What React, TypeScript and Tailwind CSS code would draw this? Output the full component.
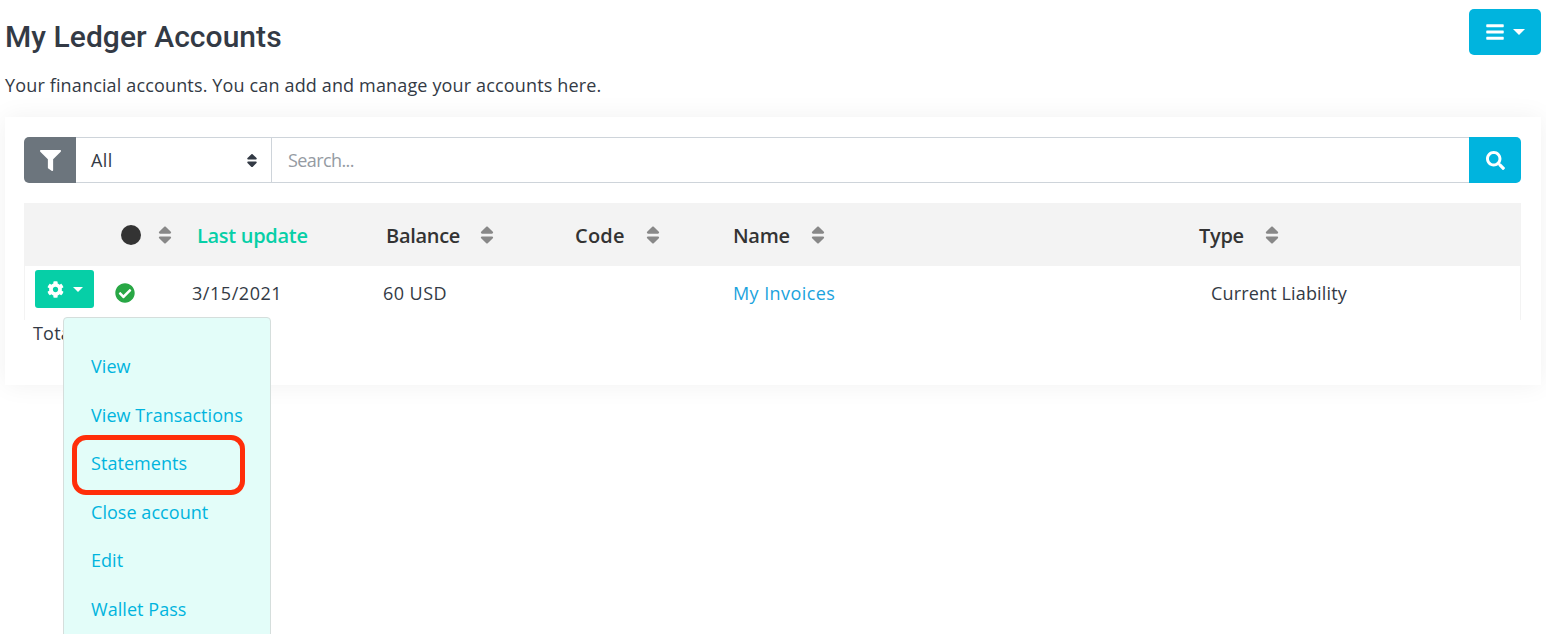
import { FaBars, FaCheckCircle, FaCog, FaFilter, FaSearch, FaSort } from "react-icons/fa";

const Caret = ({ cls }: { cls: string }) => (
  <span className={`inline-block w-0 h-0 border-x-[5px] border-x-transparent border-t-[5px] border-t-white ${cls}`} />
);

const Sort = () => <FaSort className="text-[#888888] w-[14px] h-[22px] shrink-0" />;

const Head = ({ label, pl, gap, green, cls }: { label: string; pl: string; gap: string; green?: boolean; cls?: string }) => (
  <div className={`flex items-center ${pl} ${gap}`}>
    <span className={`text-[20px] font-semibold leading-none relative top-[1px] ${green ? "text-[#06cfa7]" : "text-[#333333]"} ${cls ?? "tracking-[-0.3px]"}`}>{label}</span>
    {!green && <Sort />}
  </div>
);

const items = ["View", "View Transactions", "Statements", "Close account", "Edit", "Wallet Pass"];

export default function App() {
  return (
    <div className="relative h-[634px] w-[1546px] overflow-hidden bg-white text-[#333a45] font-['Open_Sans','Noto_Sans',sans-serif]">
      <div className="flex justify-between pl-[5px] pr-[5px] pt-[9px]">
        <h1 className="font-['Roboto',sans-serif] text-[30px] font-medium leading-[55px] tracking-[0.05px]">My Ledger Accounts</h1>
        <button className="flex h-[46px] w-[72px] items-center justify-center gap-[9px] rounded-[5px] bg-[#00b4de]">
          <FaBars className="h-[20px] w-[18px] text-white" />
          <Caret cls="border-x-[6px] border-t-[6px]" />
        </button>
      </div>
      <p className="ml-[5px] mt-[7px] text-[18px] leading-[28px] tracking-[0.15px]">Your financial accounts. You can add and manage your accounts here.</p>

      <div className="mx-[5px] mt-[18px] h-[268px] bg-white pl-[19px] pr-[20px] pt-[20px] shadow-[0_0_24px_rgba(0,0,0,0.06)]">
        <div className="flex h-[46px]">
          <div className="flex w-[52px] items-center justify-center rounded-l-[5px] bg-[#6c757d]">
            <FaFilter className="h-[21px] w-[21px] text-white" />
          </div>
          <div className="flex w-[196px] items-center justify-between border-y border-r border-[#ced4da] pl-[15px] pr-[13px] text-[18px]">
            <span className="tracking-[0.4px]">All</span>
            <FaSort className="h-[17px] w-[12px] text-[#333a45]" />
          </div>
          <div className="flex flex-1 items-center border-y border-[#ced4da] pl-[16px] text-[18px] tracking-[-0.6px] text-[#959ba3]">Search...</div>
          <div className="flex w-[52px] items-center justify-center rounded-r-[5px] bg-[#00b4de]">
            <FaSearch className="h-[19px] w-[19px] text-white" />
          </div>
        </div>

        <div className="mt-[20px] grid grid-cols-[81px_77px_191px_192px_158px_466px_1fr]">
          <div className="col-span-7 grid h-[63px] grid-cols-subgrid items-center bg-[#f3f3f3]">
            <div />
            <div className="flex items-center gap-[17px] pl-[16px]">
              <span className="h-[20px] w-[20px] rounded-full bg-[#333333]" />
              <Sort />
            </div>
            <Head label="Last update" pl="pl-[15px]" gap="gap-0" green />
            <Head label="Balance" pl="pl-[13px]" gap="gap-[20px]" />
            <Head label="Code" pl="pl-[10px]" gap="gap-[21px]" cls="tracking-[0.2px]" />
            <Head label="Name" pl="pl-[10px]" gap="gap-[21px]" />
            <Head label="Type" pl="pl-[10px]" gap="gap-[21px]" />
          </div>
          <div className="col-span-7 grid h-[54px] grid-cols-subgrid items-center border-x border-[#f3f3f3] text-[18px]">
            <div className="self-start pl-[10px] pt-[4px]">
              <button className="flex h-[38px] w-[59px] items-center justify-center gap-[9px] rounded-[3px] bg-[#06cfa7]">
                <FaCog className="h-[17px] w-[17px] text-white" />
                <Caret cls="" />
              </button>
            </div>
            <div className="pl-[10px]"><FaCheckCircle className="h-[20px] w-[20px] text-[#28a745]" /></div>
            <div className="pl-[10px] tracking-[0.55px]">3/15/2021</div>
            <div className="pl-[10px] tracking-[0.45px]">60 USD</div>
            <div />
            <div className="pl-[10px] tracking-[0.42px] text-[#1ba3dd]">My Invoices</div>
            <div className="pl-[22px] tracking-[0.15px]">Current Liability</div>
          </div>
        </div>
        <p className="ml-[9px] mt-[-1px] text-[18px] leading-[28px] tracking-[0.2px]">Total</p>
      </div>

      <div className="absolute left-[63px] top-[317px] h-[340px] w-[208px] rounded-[4px] border border-[#d5dedc] bg-[#e3fdf9] pl-[27px] pt-[24px] text-[18px] tracking-[0.05px] text-[#00b4de]">
        {items.map((t) => (
          <div key={t} className="h-[48.6px] leading-[48px]">{t}</div>
        ))}
      </div>

      <div className="absolute left-[72px] top-[435px] h-[60px] w-[173px] rounded-[14px] border-[5px] border-[#ff2e0a]" />
    </div>
  );
}
